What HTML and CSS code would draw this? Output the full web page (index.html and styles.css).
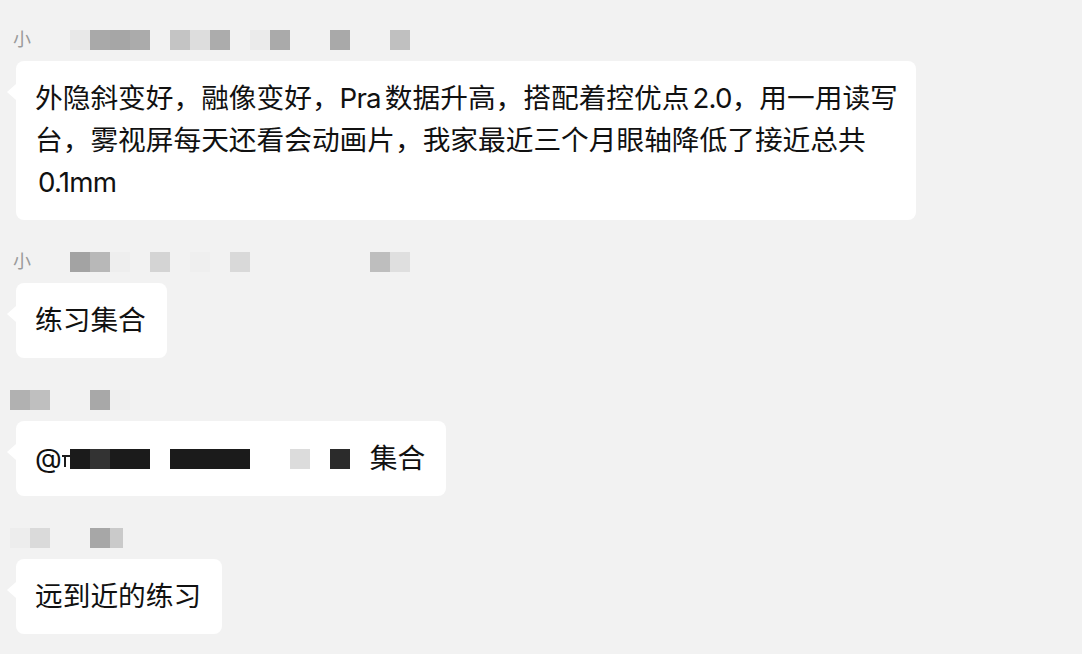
FILE: index.html
```html
<!DOCTYPE html>
<html lang="zh-CN">
<head>
<meta charset="utf-8">
<title>Chat</title>
<link rel="stylesheet" href="styles.css">
</head>
<body>
<div class="chat">

  <div class="msg">
    <div class="name">
      <span class="cell txt">小</span><span class="cell"></span><span class="cell"></span>
      <span class="cell s-e8"></span><span class="cell s-a9"></span><span class="cell s-a6"></span><span class="cell s-ab"></span>
      <span class="cell"></span>
      <span class="cell s-c4"></span><span class="cell s-dd"></span><span class="cell s-ac"></span>
      <span class="cell"></span>
      <span class="cell s-eb"></span><span class="cell s-aa"></span>
      <span class="cell"></span><span class="cell"></span>
      <span class="cell s-a9"></span>
      <span class="cell"></span><span class="cell"></span>
      <span class="cell s-c0"></span>
    </div>
    <div class="bubble wide">外隐斜变好，融像变好，<span class="lat gap-r">Pra</span>数据升高，搭配着控优点<span class="lat gap-l">2.0</span>，用一用读写<br>台，雾视屏每天还看会动画片，我家最近三个月眼轴降低了接近总共<br><span class="lat gap-l">0.1mm</span></div>
  </div>

  <div class="msg">
    <div class="name">
      <span class="cell txt">小</span><span class="cell"></span><span class="cell"></span>
      <span class="cell s-a3"></span><span class="cell s-b8"></span><span class="cell s-ee"></span>
      <span class="cell"></span>
      <span class="cell s-d4"></span><span class="cell"></span><span class="cell s-ef"></span>
      <span class="cell"></span>
      <span class="cell s-d9"></span>
      <span class="cell"></span><span class="cell"></span><span class="cell"></span><span class="cell"></span><span class="cell"></span><span class="cell"></span>
      <span class="cell s-be"></span><span class="cell s-df"></span>
    </div>
    <div class="bubble">练习集合</div>
  </div>

  <div class="msg">
    <div class="name">
      <span class="cell s-b1"></span><span class="cell s-bf"></span>
      <span class="cell"></span><span class="cell"></span>
      <span class="cell s-a8"></span><span class="cell s-ef"></span>
    </div>
    <div class="bubble">@<span class="mask"><span class="blk w8 frag"></span><span class="blk w20 k-1b"></span><span class="blk w20 k-33"></span><span class="blk w40 k-1b"></span><span class="blk w20"></span><span class="blk w80 k-1b"></span><span class="blk w40"></span><span class="blk w20 k-dc"></span><span class="blk w20"></span><span class="blk w20 k-2b"></span><span class="blk w20"></span></span>集合</div>
  </div>

  <div class="msg">
    <div class="name">
      <span class="cell s-ed"></span><span class="cell s-da"></span>
      <span class="cell"></span><span class="cell"></span>
      <span class="cell s-a7"></span><span class="cell half s-ca"></span>
    </div>
    <div class="bubble">远到近的练习</div>
  </div>

</div>
</body>
</html>
```

FILE: styles.css
```css
* { box-sizing: border-box; }

html, body {
  margin: 0;
  padding: 0;
  background: #f2f2f2;
}

body {
  width: 1082px;
  height: 654px;
  overflow: hidden;
  font-family: Inter, "Noto Sans CJK SC", sans-serif;
  color: #111111;
}

.chat {
  display: flex;
  flex-direction: column;
  gap: 32px;
  padding-top: 30px;
}

.msg {
  display: flex;
  flex-direction: column;
  align-items: flex-start;
}

.name {
  display: flex;
  height: 20px;
  margin-left: 10px;
}

.cell {
  display: block;
  width: 20px;
  height: 20px;
  flex: none;
}

.cell.half { width: 13px; }

.cell.txt {
  font-size: 18px;
  line-height: 20px;
  text-align: center;
  color: #9a9a9a;
  padding-left: 3px;
}

.s-a3 { background: #a3a3a3; }
.s-a6 { background: #a6a6a6; }
.s-a7 { background: #a7a7a7; }
.s-a8 { background: #a8a8a8; }
.s-a9 { background: #a9a9a9; }
.s-aa { background: #aaaaaa; }
.s-ab { background: #ababab; }
.s-ac { background: #acacac; }
.s-b1 { background: #b1b1b1; }
.s-b8 { background: #b8b8b8; }
.s-be { background: #bebebe; }
.s-bf { background: #bfbfbf; }
.s-c0 { background: #c0c0c0; }
.s-c4 { background: #c4c4c4; }
.s-ca { background: #cacaca; }
.s-d4 { background: #d4d4d4; }
.s-d9 { background: #d9d9d9; }
.s-da { background: #dadada; }
.s-dd { background: #dddddd; }
.s-df { background: #dfdfdf; }
.s-e8 { background: #e8e8e8; }
.s-eb { background: #ebebeb; }
.s-ed { background: #ededed; }
.s-ee { background: #eeeeee; }
.s-ef { background: #efefef; }

.bubble {
  position: relative;
  margin-top: 11px;
  margin-left: 16px;
  background: #ffffff;
  border-radius: 8px;
  padding: 16px 21px 17px 19px;
  font-size: 27.7px;
  line-height: 42px;
  white-space: nowrap;
}

.bubble.wide { width: 900px; }

.bubble::before {
  content: "";
  position: absolute;
  left: -9px;
  top: 23px;
  border-top: 8px solid transparent;
  border-bottom: 8px solid transparent;
  border-right: 9px solid #ffffff;
}

.lat { letter-spacing: -0.8px; }
.gap-r { margin-right: 4px; }
.gap-l { margin-left: 3px; }

.mask {
  display: inline-flex;
  vertical-align: top;
  height: 42px;
  align-items: center;
  padding-top: 1px;
}

.blk {
  display: block;
  height: 20px;
  flex: none;
}

.w8 { width: 8px; }
.w20 { width: 20px; }
.w40 { width: 40px; }
.w80 { width: 80px; }

.frag {
  background: linear-gradient(#1b1b1b, #1b1b1b) 0 6px / 8px 2px no-repeat,
              linear-gradient(#1b1b1b, #1b1b1b) 2px 8px / 2px 10px no-repeat;
}

.k-1b { background: #1b1b1b; }
.k-33 { background: #333333; }
.k-2b { background: #2b2b2b; }
.k-dc { background: #dcdcdc; }
```
